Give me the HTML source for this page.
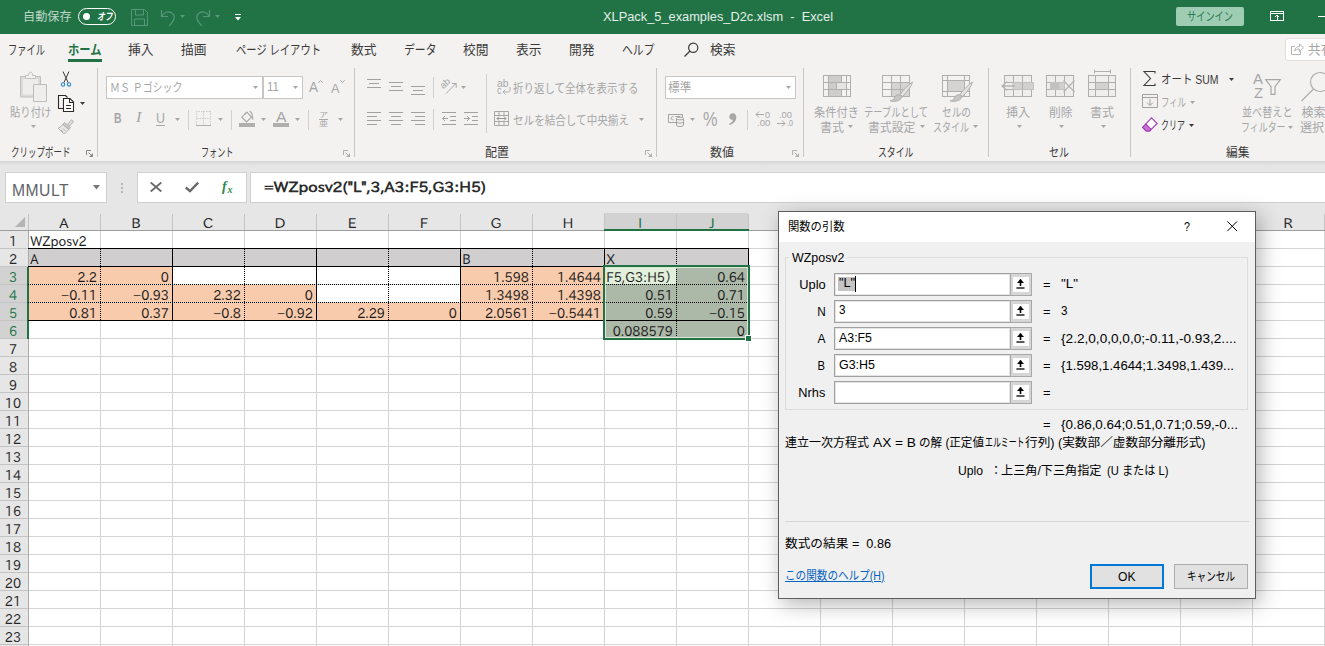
<!DOCTYPE html>
<html lang="ja">
<head>
<meta charset="utf-8">
<title>XLPack_5_examples_D2c.xlsm - Excel</title>
<style>
*{box-sizing:border-box;margin:0;padding:0}
html,body{width:1325px;height:646px;overflow:hidden;background:#fff}
body{position:relative;font-family:"Liberation Sans","Noto Sans CJK JP",sans-serif;font-size:12px;color:#262626}
.abs{position:absolute}
.t{position:absolute;white-space:nowrap;line-height:1}
svg{overflow:visible}
.cell{position:absolute;font-family:"IPAPGothic","IPAGothic","Noto Sans CJK JP",sans-serif;font-size:13.5px;line-height:18px;height:18px;white-space:nowrap;color:#1a1a1a;transform:scaleX(.955);transform-origin:0 50%}
.num{text-align:right;transform-origin:100% 50%}
.hc{transform-origin:50% 50%}
</style>
</head>
<body>
<div class="abs" style="left:0px;top:0px;width:1325px;height:34px;background:#217346;"></div><span class="t" id="t1" style="top:11.20px;font-size:12.2px;color:#bcd7c8;left:23.00px;transform-origin:0 50%;transform:scaleX(0.9949);">自動保存</span><div class="abs" style="left:78px;top:8px;width:38px;height:17px;border:1px solid #fff;border-radius:9px"></div><div class="abs" style="left:83px;top:13px;width:7px;height:7px;background:#fff;border-radius:50%"></div><span class="t" id="t2" style="top:12.00px;font-size:10px;color:#fff;font-weight:bold;font-style:italic;left:96.50px;transform-origin:0 50%;transform:scaleX(0.7750);">オフ</span><svg class="abs" style="left:131px;top:9px" width="17" height="17" viewBox="0 0 17 17" fill="none" stroke="#57967a" stroke-width="1"><path d="M.5.500h13l3 3v13h-16z"/><path d="M4.500.500v5.500h8v-5.500M3.500 16.500v-6.500h10v6.500"/></svg><svg class="abs" style="left:160px;top:9px" width="17" height="18" viewBox="0 0 17 18" fill="none" stroke="#57967a" stroke-width="1.2"><path d="M1.500 1v6.500h6.500"/><path d="M1.800 7.200c2.500-4 6.500-5.200 9.700-3.400 4.200 2.400 3.500 7.200-2.500 13.200"/></svg><svg class="abs" style="left:180px;top:15px" width="5" height="3" viewBox="0 0 5 3" ><path d="M0 0h5 l-2.5 3 z" fill="#57967a"/></svg><svg class="abs" style="left:194px;top:9px" width="17" height="18" viewBox="0 0 17 18" fill="none" stroke="#57967a" stroke-width="1.2"><path d="M15.500 1v6.500h-6.500"/><path d="M15.200 7.200c-2.500-4-6.500-5.200-9.700-3.400-4.200 2.400-3.500 7.200 2.500 13.200"/></svg><svg class="abs" style="left:215px;top:15px" width="5" height="3" viewBox="0 0 5 3" ><path d="M0 0h5 l-2.5 3 z" fill="#57967a"/></svg><div class="abs" style="left:235px;top:13.5px;width:6px;height:1px;background:#fff;"></div><svg class="abs" style="left:235px;top:16.5px" width="6" height="3.5" viewBox="0 0 6 3.5" ><path d="M0 0h6 l-3 3.5 z" fill="#fff"/></svg><span class="t" id="t3" style="top:10.00px;font-size:13px;color:#e4efe8;left:603.00px;transform-origin:0 50%;transform:scaleX(0.9855);">XLPack_5_examples_D2c.xlsm&nbsp; -&nbsp; Excel</span><div class="abs" style="left:1176px;top:7px;width:68px;height:19px;background:#9fcdb3;border-radius:2px"></div><span class="t" id="t4" style="top:10.50px;font-size:12px;color:#2c7a51;left:1187.00px;transform-origin:0 50%;transform:scaleX(0.7665);">サインイン</span><svg class="abs" style="left:1270px;top:11px" width="14" height="10" viewBox="0 0 14 10" fill="none" stroke="#fff" stroke-width="1" shape-rendering="crispEdges"><path d="M.5.500h13v9h-13zM.5 2.500h13M7 8.500v-4M5 6.300l2-2 2 2"/></svg><div class="abs" style="left:1318px;top:16px;width:7px;height:1px;background:#fff;"></div><div class="abs" style="left:0px;top:34px;width:1325px;height:127px;background:#f3f2f1;"></div><span class="t" id="t5" style="top:43.00px;font-size:13px;color:#3b3a39;left:8.00px;transform-origin:0 50%;transform:scaleX(0.7113);">ファイル</span><span class="t" id="t6" style="top:43.00px;font-size:13px;color:#3b3a39;left:128.00px;transform-origin:0 50%;transform:scaleX(0.9802);">挿入</span><span class="t" id="t7" style="top:43.00px;font-size:13px;color:#3b3a39;left:181.00px;transform-origin:0 50%;transform:scaleX(0.9802);">描画</span><span class="t" id="t8" style="top:43.00px;font-size:13px;color:#3b3a39;left:236.00px;transform-origin:0 50%;transform:scaleX(0.7917);">ページ レイアウト</span><span class="t" id="t9" style="top:43.00px;font-size:13px;color:#3b3a39;left:351.00px;transform-origin:0 50%;transform:scaleX(0.9802);">数式</span><span class="t" id="t10" style="top:43.00px;font-size:13px;color:#3b3a39;left:404.00px;transform-origin:0 50%;transform:scaleX(0.8330);">データ</span><span class="t" id="t11" style="top:43.00px;font-size:13px;color:#3b3a39;left:463.00px;transform-origin:0 50%;transform:scaleX(0.9802);">校閲</span><span class="t" id="t12" style="top:43.00px;font-size:13px;color:#3b3a39;left:516.00px;transform-origin:0 50%;transform:scaleX(0.9802);">表示</span><span class="t" id="t13" style="top:43.00px;font-size:13px;color:#3b3a39;left:569.00px;transform-origin:0 50%;transform:scaleX(0.9802);">開発</span><span class="t" id="t14" style="top:43.00px;font-size:13px;color:#3b3a39;left:622.00px;transform-origin:0 50%;transform:scaleX(0.8330);">ヘルプ</span><span class="t" id="t15" style="top:43.00px;font-size:13px;color:#3b3a39;left:710.00px;transform-origin:0 50%;transform:scaleX(0.9802);">検索</span><span class="t" id="t16" style="top:43.00px;font-size:13px;color:#217346;font-weight:bold;left:68.00px;transform-origin:0 50%;transform:scaleX(0.8673);">ホーム</span><div class="abs" style="left:68px;top:59px;width:34px;height:3px;background:#217346;"></div><svg class="abs" style="left:684px;top:42px" width="15" height="15" viewBox="0 0 15 15" fill="none" stroke="#3b3a39" stroke-width="1.2"><circle cx="9.200" cy="5.800" r="4.600"/><path d="M6 9l-5.500 5.500"/></svg><div class="abs" style="left:1285px;top:37.5px;width:50px;height:23.5px;background:#fff;border:1px solid #e1dfdd;border-radius:3px"></div><svg class="abs" style="left:1291px;top:43px" width="13" height="12" viewBox="0 0 13 12" fill="none" stroke="#b5b3b1" stroke-width="1"><path d="M4 3.500h-3.500v8h9v-3"/><path d="M3.500 8c.5-3 2.500-4.500 5-4.500v-2.500l4 3.800-4 3.700v-2.500c-2.500 0-4 .5-5 2z"/></svg><span class="t" id="t17" style="top:43.00px;font-size:13px;color:#a6a6a6;left:1308.00px;transform-origin:0 50%;transform:scaleX(0.9802);">共有</span><div class="abs" style="left:97px;top:68px;width:1px;height:89px;background:#c8c6c4;"></div><div class="abs" style="left:354px;top:68px;width:1px;height:89px;background:#c8c6c4;"></div><div class="abs" style="left:656px;top:68px;width:1px;height:89px;background:#c8c6c4;"></div><div class="abs" style="left:803px;top:68px;width:1px;height:89px;background:#c8c6c4;"></div><div class="abs" style="left:988px;top:68px;width:1px;height:89px;background:#c8c6c4;"></div><div class="abs" style="left:1130px;top:68px;width:1px;height:89px;background:#c8c6c4;"></div><svg class="abs" style="left:20px;top:72px" width="28" height="30" viewBox="0 0 28 30" fill="none" stroke-width="1"><path d="M.5 4.500h20v20.500h-20z" fill="#dddbd9" stroke="#c2c0be"/><path d="M3 7h15v15.500h-15z" fill="#eeedec" stroke="none"/><path d="M5.500 6.500v-3h3c0-4.500 4-4.500 4 0h3v3z" fill="#f3f2f1" stroke="#c2c0be"/><path d="M13.500 12.500h13v17h-13z" fill="#efeeed" stroke="#bebcba"/></svg><span class="t" id="t18" style="top:106.80px;font-size:12px;color:#a6a6a6;left:10.00px;transform-origin:0 50%;transform:scaleX(0.8643);">貼り付け</span><svg class="abs" style="left:31px;top:125px" width="5" height="3" viewBox="0 0 5 3" ><path d="M0 0h5 l-2.5 3 z" fill="#a6a6a6"/></svg><svg class="abs" style="left:60px;top:71px" width="12" height="17" viewBox="0 0 12 17" ><path d="M3 0.500l5.200 11.300M9 0.500l-5.200 11.300" stroke="#3b3a39" stroke-width="1" fill="none"/><circle cx="3" cy="13.500" r="1.700" fill="none" stroke="#2b88d8" stroke-width="1.1"/><circle cx="9" cy="13.500" r="1.700" fill="none" stroke="#2b88d8" stroke-width="1.1"/></svg><svg class="abs" style="left:58px;top:95px" width="16" height="17" viewBox="0 0 16 17" fill="none" stroke="#2b2a29" stroke-width="1.100" stroke-linejoin="miter"><path d="M5 13.500h-4.500v-13h7l2 2"/><path d="M5.500 3.500h6.500l3.500 3.500v9.500h-10z" fill="#fff"/><path d="M11.500 3.500v4h4"/><path d="M8 10.500h5M8 13.500h5"/></svg><svg class="abs" style="left:80px;top:102px" width="5" height="3" viewBox="0 0 5 3" ><path d="M0 0h5 l-2.5 3 z" fill="#3b3a39"/></svg><svg class="abs" style="left:58px;top:119px" width="16" height="15" viewBox="0 0 16 15" fill="none" stroke="#b1afad" stroke-width="1"><path d="M13.500 .8l2 1.700-3.800 4.500-2-1.700z" fill="#e4e2e0"/><path d="M6.500 3.500l6 5-1.500 1.800-6-5z" fill="#cfcdcb"/><path d="M4.800 5.500l6 5c-1.500 2-3 3.300-5 4.300l-5.500-5.500c2-1.200 3.500-2.500 4.500-3.800z" fill="#e9e7e5"/><path d="M3 11l2 2M5 9.500l2.500 2.500"/></svg><span class="t" id="t19" style="top:147.00px;font-size:12px;color:#3b3a39;left:10.80px;transform-origin:0 50%;transform:scaleX(0.7082);">クリップボード</span><svg class="abs" style="left:86px;top:150px" width="7" height="7" viewBox="0 0 7 7" ><path d="M.5 5v-4.500h4.500" fill="none" stroke="#8a8886" stroke-width="1"/><path d="M2.500 2.500l3 3" fill="none" stroke="#8a8886" stroke-width="1"/><path d="M7 3v4h-4z" fill="#8a8886"/></svg><div class="abs" style="left:106px;top:76px;width:157px;height:23px;background:#fff;border:1px solid #c8c6c4"></div><div class="abs" style="left:263px;top:76px;width:40px;height:23px;background:#fff;border:1px solid #c8c6c4"></div><span class="t" id="t20" style="top:81.50px;font-size:12px;color:#a6a6a6;left:110.00px;transform-origin:0 50%;transform:scaleX(0.8301);">ＭＳ Ｐゴシック</span><svg class="abs" style="left:253px;top:86px" width="5" height="3" viewBox="0 0 5 3" ><path d="M0 0h5 l-2.5 3 z" fill="#a6a6a6"/></svg><span class="t" id="t21" style="top:81.25px;font-size:12.5px;color:#a6a6a6;left:267.00px;transform-origin:0 50%;transform:scaleX(0.9242);">11</span><svg class="abs" style="left:293px;top:86px" width="5" height="3" viewBox="0 0 5 3" ><path d="M0 0h5 l-2.5 3 z" fill="#a6a6a6"/></svg><span class="t" id="t22" style="top:80.00px;font-size:14px;color:#a6a6a6;left:309.00px;transform-origin:0 50%;transform:scaleX(0.9632);">A</span><svg class="abs" style="left:317.5px;top:80px" width="4.4" height="3" viewBox="0 0 4.4 3" ><path d="M.3 2.800l2.200-2.300 2.200 2.300" fill="none" stroke="#a6a6a6" stroke-width="1"/></svg><span class="t" id="t23" style="top:81.50px;font-size:13px;color:#a6a6a6;left:331.00px;transform-origin:0 50%;transform:scaleX(0.9802);">A</span><svg class="abs" style="left:340px;top:80px" width="5" height="3" viewBox="0 0 5 3" ><path d="M.3.200l2.200 2.300 2.200-2.300" fill="none" stroke="#a6a6a6" stroke-width="1"/></svg><span class="t" id="t24" style="top:111.00px;font-size:14px;color:#a6a6a6;font-weight:bold;left:113.50px;transform-origin:0 50%;transform:scaleX(0.7407);">B</span><span class="t" id="t25" style="top:111.00px;font-size:14px;color:#a6a6a6;font-style:italic;font-family:'Liberation Serif',serif;left:136.00px;transform-origin:0 50%;transform:scaleX(1.1773);">I</span><span class="t" id="t26" style="top:110.50px;font-size:14px;color:#a6a6a6;left:156.00px;transform-origin:0 50%;transform:scaleX(0.8889);">U</span><div class="abs" style="left:156px;top:125px;width:9px;height:1px;background:#a6a6a6;"></div><svg class="abs" style="left:175px;top:118px" width="5" height="3" viewBox="0 0 5 3" ><path d="M0 0h5 l-2.5 3 z" fill="#a6a6a6"/></svg><div class="abs" style="left:188px;top:110px;width:1px;height:20px;background:#d2d0ce;"></div><svg class="abs" style="left:196px;top:111px" width="15" height="15" viewBox="0 0 15 15" fill="none" stroke-width="1"><path d="M.5 0v14M14.500 0v14M0 .5h15M7.500 1v13M1 7.500h13" stroke="#cfcdcb" stroke-dasharray="1.500 1"/><path d="M0 14.500h15" stroke="#b1afad"/></svg><svg class="abs" style="left:218px;top:118px" width="5" height="3" viewBox="0 0 5 3" ><path d="M0 0h5 l-2.5 3 z" fill="#a6a6a6"/></svg><div class="abs" style="left:231px;top:110px;width:1px;height:20px;background:#d2d0ce;"></div><svg class="abs" style="left:239px;top:110px" width="16" height="18" viewBox="0 0 16 18" fill="none" stroke="#a9a7a5" stroke-width="1.100"><path d="M7.800 2.200l4.800 4.800-5 5-4.800-4.800z" fill="#f3f2f1"/><path d="M5.500 4.500l2.300-2.300M10.500 1.200c1.800 .8 3.300 3.300 2.800 6.500" /><path d="M13.300 7c.8 1.200 1 2 0 2.500" /><rect x="0" y="13" width="16" height="4" fill="#b1afad" stroke="none"/></svg><svg class="abs" style="left:261px;top:118px" width="5" height="3" viewBox="0 0 5 3" ><path d="M0 0h5 l-2.5 3 z" fill="#a6a6a6"/></svg><span class="t" id="t27" style="top:109.55px;font-size:14.5px;color:#a6a6a6;left:276.00px;transform-origin:0 50%;transform:scaleX(1.0856);">A</span><div class="abs" style="left:273px;top:123px;width:16px;height:4px;background:#b1afad;"></div><svg class="abs" style="left:295px;top:118px" width="5" height="3" viewBox="0 0 5 3" ><path d="M0 0h5 l-2.5 3 z" fill="#a6a6a6"/></svg><div class="abs" style="left:308px;top:110px;width:1px;height:20px;background:#d2d0ce;"></div><span class="t" id="t28" style="top:111.00px;font-size:7px;color:#a6a6a6;font-family:'Noto Sans CJK JP',sans-serif;left:319.00px;transform-origin:0 50%;transform:scaleX(1.2857);">ア</span><span class="t" id="t29" style="top:119.00px;font-size:8px;color:#a6a6a6;font-family:'Noto Sans CJK JP',sans-serif;left:319.00px;transform-origin:0 50%;transform:scaleX(1.1250);">亜</span><div class="abs" style="left:319px;top:118.5px;width:9px;height:1px;background:#a6a6a6;"></div><svg class="abs" style="left:338px;top:118px" width="5" height="3" viewBox="0 0 5 3" ><path d="M0 0h5 l-2.5 3 z" fill="#a6a6a6"/></svg><span class="t" id="t30" style="top:147.00px;font-size:12px;color:#3b3a39;left:201.00px;transform-origin:0 50%;transform:scaleX(0.6769);">フォント</span><svg class="abs" style="left:343px;top:150px" width="7" height="7" viewBox="0 0 7 7" ><path d="M.5 5v-4.500h4.500" fill="none" stroke="#b1afad" stroke-width="1"/><path d="M2.500 2.500l3 3" fill="none" stroke="#b1afad" stroke-width="1"/><path d="M7 3v4h-4z" fill="#b1afad"/></svg><svg class="abs" style="left:367px;top:79px" width="14" height="12" viewBox="0 0 14 12" ><rect x="0" y="0" width="14" height="1" fill="#a3a19f"/><rect x="2" y="4" width="10" height="1" fill="#a3a19f"/><rect x="0" y="8" width="14" height="1" fill="#a3a19f"/></svg><svg class="abs" style="left:389px;top:82px" width="14" height="12" viewBox="0 0 14 12" ><rect x="0" y="0" width="14" height="1" fill="#a3a19f"/><rect x="2" y="4" width="10" height="1" fill="#a3a19f"/><rect x="0" y="8" width="14" height="1" fill="#a3a19f"/></svg><svg class="abs" style="left:411px;top:86px" width="14" height="12" viewBox="0 0 14 12" ><rect x="0" y="0" width="14" height="1" fill="#a3a19f"/><rect x="2" y="4" width="10" height="1" fill="#a3a19f"/><rect x="0" y="8" width="14" height="1" fill="#a3a19f"/></svg><div class="abs" style="left:433px;top:77px;width:1px;height:21px;background:#d2d0ce;"></div><span class="t" id="t31" style="top:81.75px;font-size:9.5px;color:#a6a6a6;left:440.50px;transform-origin:0 50%;transform-origin:0 50%;rotate:-42deg;">ab</span><svg class="abs" style="left:445px;top:82px" width="12" height="12" viewBox="0 0 12 12" fill="none" stroke="#a9a7a5" stroke-width="1"><path d="M1 11.500l10-10M7 1.500h4.200v4.200"/></svg><svg class="abs" style="left:461px;top:86px" width="5" height="3" viewBox="0 0 5 3" ><path d="M0 0h5 l-2.5 3 z" fill="#a6a6a6"/></svg><div class="abs" style="left:486px;top:74px;width:1px;height:59px;background:#d2d0ce;"></div><span class="t" id="t32" style="top:78.50px;font-size:10px;color:#a6a6a6;left:496.50px;transform-origin:0 50%;transform:scaleX(1.0337);">ab</span><span class="t" id="t33" style="top:86.00px;font-size:10px;color:#a6a6a6;left:496.50px;transform-origin:0 50%;transform:scaleX(0.9000);">c</span><svg class="abs" style="left:502px;top:87px" width="9" height="8" viewBox="0 0 9 8" fill="none" stroke="#b1afad" stroke-width="1"><path d="M8 0v3.500c0 1-1 1.500-2 1.500h-5M3.500 2.500l-2.500 2.500 2.500 2.500"/></svg><span class="t" id="t34" style="top:83.00px;font-size:12px;color:#a6a6a6;left:513.00px;transform-origin:0 50%;transform:scaleX(0.8736);">折り返して全体を表示する</span><svg class="abs" style="left:367px;top:112px" width="14" height="16" viewBox="0 0 14 16" ><rect x="0" y="0" width="14" height="1" fill="#a3a19f"/><rect x="0" y="4" width="10" height="1" fill="#a3a19f"/><rect x="0" y="8" width="14" height="1" fill="#a3a19f"/><rect x="0" y="12" width="10" height="1" fill="#a3a19f"/></svg><svg class="abs" style="left:389px;top:112px" width="14" height="16" viewBox="0 0 14 16" ><rect x="0" y="0" width="14" height="1" fill="#a3a19f"/><rect x="2" y="4" width="10" height="1" fill="#a3a19f"/><rect x="0" y="8" width="14" height="1" fill="#a3a19f"/><rect x="2" y="12" width="10" height="1" fill="#a3a19f"/></svg><svg class="abs" style="left:411px;top:112px" width="14" height="16" viewBox="0 0 14 16" ><rect x="0" y="0" width="14" height="1" fill="#a3a19f"/><rect x="4" y="4" width="10" height="1" fill="#a3a19f"/><rect x="0" y="8" width="14" height="1" fill="#a3a19f"/><rect x="4" y="12" width="10" height="1" fill="#a3a19f"/></svg><div class="abs" style="left:433px;top:109px;width:1px;height:21px;background:#d2d0ce;"></div><svg class="abs" style="left:442px;top:112px" width="14" height="13" viewBox="0 0 14 13" fill="none" stroke="#a3a19f" stroke-width="1"><path d="M0 .5h14M8 4.500h6M8 8.500h6M0 12.500h14M6 6.500h-5.500M3 4l-2.500 2.500 2.500 2.500"/></svg><svg class="abs" style="left:464px;top:112px" width="14" height="13" viewBox="0 0 14 13" fill="none" stroke="#a3a19f" stroke-width="1"><path d="M0 .5h14M8 4.500h6M8 8.500h6M0 12.500h14M0 6.500h5.500M3 4l2.500 2.500-2.500 2.500"/></svg><svg class="abs" style="left:494px;top:111px" width="15" height="15" viewBox="0 0 15 15" fill="none" stroke="#a9a7a5" stroke-width="1"><path d="M.5.500h14v14h-14zM.5 4.500h14M.5 10.500h14M5 .5v4M10 .5v4M5 10.500v4M10 10.500v4"/><path d="M3 7.500h9M5 5.500l-2 2 2 2M10 5.500l2 2-2 2" stroke="#979593"/></svg><span class="t" id="t35" style="top:114.50px;font-size:12px;color:#a6a6a6;left:513.00px;transform-origin:0 50%;transform:scaleX(0.8811);">セルを結合して中央揃え</span><svg class="abs" style="left:639px;top:118px" width="5" height="3" viewBox="0 0 5 3" ><path d="M0 0h5 l-2.5 3 z" fill="#a6a6a6"/></svg><span class="t" id="t36" style="top:147.00px;font-size:12px;color:#3b3a39;left:485.00px;transform-origin:0 50%;">配置</span><svg class="abs" style="left:645px;top:150px" width="7" height="7" viewBox="0 0 7 7" ><path d="M.5 5v-4.500h4.500" fill="none" stroke="#b1afad" stroke-width="1"/><path d="M2.500 2.500l3 3" fill="none" stroke="#b1afad" stroke-width="1"/><path d="M7 3v4h-4z" fill="#b1afad"/></svg><div class="abs" style="left:665px;top:76px;width:131px;height:23px;background:#fff;border:1px solid #c8c6c4"></div><span class="t" id="t37" style="top:81.50px;font-size:12px;color:#a6a6a6;left:667.50px;transform-origin:0 50%;transform:scaleX(0.9785);">標準</span><svg class="abs" style="left:786px;top:86px" width="5" height="3" viewBox="0 0 5 3" ><path d="M0 0h5 l-2.5 3 z" fill="#a6a6a6"/></svg><svg class="abs" style="left:668px;top:114px" width="16" height="13" viewBox="0 0 16 13" fill="none" stroke="#a3a19f" stroke-width="1"><path d="M.5.500h14v8h-14z"/><path d="M5.500 2.800c-2.500-.8-3.500 3.500 0 3M7.500 2.500h4.500"/><path d="M8.500 4.500v6.500c0 2 7 2 7 0v-6.500" fill="#f3f2f1"/><ellipse cx="12" cy="4.500" rx="3.500" ry="1.400" fill="#f3f2f1"/><path d="M8.500 7.700c0 1.800 7 1.800 7 0"/></svg><svg class="abs" style="left:690px;top:118px" width="5" height="3" viewBox="0 0 5 3" ><path d="M0 0h5 l-2.5 3 z" fill="#a6a6a6"/></svg><span class="t" id="t38" style="top:108.50px;font-size:20px;color:#a6a6a6;left:702.50px;transform-origin:0 50%;transform:scaleX(0.8147);">%</span><svg class="abs" style="left:728px;top:113px" width="9" height="13" viewBox="0 0 9 13" ><path d="M4.800 .3c2.200 0 3.500 1.700 3.500 4 0 3.500-2.500 6.500-6.800 7.700l-.5-1c2.500-1 3.800-2.500 3.800-4.200-2 .3-3.500-1-3.500-3s1.500-3.500 3.500-3.500z" fill="#a9a7a5"/></svg><div class="abs" style="left:747px;top:110px;width:1px;height:20px;background:#d2d0ce;"></div><span class="t" id="t39" style="top:109.75px;font-size:9.5px;color:#a6a6a6;left:765.00px;transform-origin:0 50%;transform:scaleX(0.9440);">0</span><span class="t" id="t40" style="top:118.25px;font-size:9.5px;color:#a6a6a6;left:756.50px;transform-origin:0 50%;transform:scaleX(1.0213);">.00</span><svg class="abs" style="left:755px;top:111px" width="9" height="7" viewBox="0 0 9 7" fill="none" stroke="#a9a7a5" stroke-width="1"><path d="M9 3.500h-8M4 .5l-3 3 3 3"/></svg><span class="t" id="t41" style="top:109.75px;font-size:9.5px;color:#a6a6a6;left:779.00px;transform-origin:0 50%;transform:scaleX(0.9835);">.00</span><span class="t" id="t42" style="top:118.25px;font-size:9.5px;color:#a6a6a6;left:786.50px;transform-origin:0 50%;transform:scaleX(0.7559);">.0</span><svg class="abs" style="left:777px;top:119.5px" width="9" height="7" viewBox="0 0 9 7" fill="none" stroke="#a9a7a5" stroke-width="1"><path d="M0 3.500h8M5 .5l3 3-3 3"/></svg><span class="t" id="t43" style="top:147.00px;font-size:12px;color:#3b3a39;left:710.00px;transform-origin:0 50%;">数値</span><svg class="abs" style="left:792px;top:150px" width="7" height="7" viewBox="0 0 7 7" ><path d="M.5 5v-4.500h4.500" fill="none" stroke="#b1afad" stroke-width="1"/><path d="M2.500 2.500l3 3" fill="none" stroke="#b1afad" stroke-width="1"/><path d="M7 3v4h-4z" fill="#b1afad"/></svg><svg class="abs" style="left:823px;top:75px" width="28" height="22" viewBox="0 0 28 22" fill="none" stroke="#b1afad" stroke-width="1"><rect x=".5" y=".5" width="27" height="21" fill="#f3f2f1"/><path d="M5.500 1h13v6.500h-13zM5.500 7.500h8v7h-8zM5.500 14.500h13v7h-13z" fill="#cfcdcb" stroke="none"/><path d="M13.500 7.500h9.500v7h-9.500z" fill="#e6e4e2" stroke="none"/><path d="M.5.500h27v21h-27zM.5 7.500h27M.5 14.500h27M5.500.500v21M18.500.500v7M18.500 14.500v7M23.500.500v21M13.500 7.500v7"/></svg><span class="t" id="t44" style="top:106.80px;font-size:12px;color:#a6a6a6;left:814.00px;transform-origin:0 50%;transform:scaleX(0.9372);">条件付き</span><span class="t" id="t45" style="top:122.00px;font-size:12px;color:#a6a6a6;left:820.00px;transform-origin:0 50%;">書式</span><svg class="abs" style="left:848px;top:125px" width="5" height="3" viewBox="0 0 5 3" ><path d="M0 0h5 l-2.5 3 z" fill="#a6a6a6"/></svg><svg class="abs" style="left:882px;top:75px" width="30" height="24" viewBox="0 0 30 24" fill="none" stroke="#b1afad" stroke-width="1"><path d="M.5.500h27v21h-27z" fill="#f3f2f1"/><path d="M9.500 7.500h18v14h-18z" fill="#d6d4d2" stroke="none"/><path d="M.5.500h27v21h-27zM.5 7.500h27M.5 14.500h27M9.500.500v21M18.500.500v21"/><path d="M30.500 7c-4 2.500-9 7.500-12.500 12.500l2.500 2c4-4 9-10 10-14.500z" fill="#e4e2e0"/><path d="M17.500 19.800c-2.500-.5-4.500 1-5 3.200-.5 1.500-2 2.500-4.500 2.800 4 1.200 10 .7 12-3.800z" fill="#c8c6c4"/></svg><span class="t" id="t46" style="top:106.80px;font-size:12px;color:#a6a6a6;left:864.00px;transform-origin:0 50%;transform:scaleX(0.7718);">テーブルとして</span><span class="t" id="t47" style="top:122.00px;font-size:12px;color:#a6a6a6;left:868.00px;transform-origin:0 50%;transform:scaleX(0.9893);">書式設定</span><svg class="abs" style="left:920px;top:125px" width="5" height="3" viewBox="0 0 5 3" ><path d="M0 0h5 l-2.5 3 z" fill="#a6a6a6"/></svg><svg class="abs" style="left:942px;top:75px" width="30" height="24" viewBox="0 0 30 24" fill="none" stroke="#b1afad" stroke-width="1"><path d="M.5.500h27v21h-27z" fill="#f3f2f1"/><path d="M5.500 5.500h17v11h-17z" fill="#d6d4d2" stroke="none"/><path d="M.5.500h27v21h-27zM.5 5.500h27M.5 16.500h27M5.500.500v21M22.500.500v21"/><path d="M30.500 7c-4 2.500-9 7.500-12.500 12.500l2.500 2c4-4 9-10 10-14.500z" fill="#e4e2e0"/><path d="M17.500 19.800c-2.500-.5-4.500 1-5 3.200-.5 1.500-2 2.500-4.500 2.800 4 1.200 10 .7 12-3.800z" fill="#c8c6c4"/></svg><span class="t" id="t48" style="top:106.80px;font-size:12px;color:#a6a6a6;left:941.50px;transform-origin:0 50%;transform:scaleX(0.8052);">セルの</span><span class="t" id="t49" style="top:122.00px;font-size:12px;color:#a6a6a6;left:932.50px;transform-origin:0 50%;transform:scaleX(0.7498);">スタイル</span><svg class="abs" style="left:973px;top:125px" width="5" height="3" viewBox="0 0 5 3" ><path d="M0 0h5 l-2.5 3 z" fill="#a6a6a6"/></svg><span class="t" id="t50" style="top:147.00px;font-size:12px;color:#3b3a39;left:878.00px;transform-origin:0 50%;transform:scaleX(0.7393);">スタイル</span><svg class="abs" style="left:1001px;top:75px" width="33" height="22" viewBox="0 0 33 22" fill="none" stroke="#b1afad" stroke-width="1"><rect x="3.500" y=".5" width="27" height="21" fill="#efeeed"/><path d="M3.500.500h27v21h-27zM3.500 7.500h27M3.500 14.500h27M12.500.500v21M21.500.500v21"/><path d="M12 7.500h20.500v7h-20.500z" fill="#d3d1cf" stroke="#c3c1bf"/><path d="M21.500 7.500v7"/><path d="M14 11h-12.500M6 6.500l-5 4.500 5 4.500" stroke="#b7b5b3" stroke-width="1.300"/></svg><span class="t" id="t51" style="top:106.80px;font-size:12px;color:#a6a6a6;left:1006.00px;transform-origin:0 50%;">挿入</span><svg class="abs" style="left:1016.5px;top:125px" width="5" height="3" viewBox="0 0 5 3" ><path d="M0 0h5 l-2.5 3 z" fill="#a6a6a6"/></svg><svg class="abs" style="left:1043px;top:75px" width="33" height="22" viewBox="0 0 33 22" fill="none" stroke="#b1afad" stroke-width="1"><rect x="3.500" y=".5" width="27" height="21" fill="#efeeed"/><path d="M3.500 7.500v-7h27v7M3.500 14.500v7h27v-7M3.500 7.500h18M3.500 14.500h18M12.500.500v21M21.500.500v7M21.500 14.500v7"/><path d="M7.500 7.500h14v7h-14z" fill="#d3d1cf" stroke="#c3c1bf"/><path d="M7.500 7.500h9v7h-9z" fill="#c4c2c0" stroke="none"/><path d="M20.500 5.500l11 11.500M31.500 5.500l-11 11.500" stroke="#b7b5b3" stroke-width="1.300"/></svg><span class="t" id="t52" style="top:106.80px;font-size:12px;color:#a6a6a6;left:1048.50px;transform-origin:0 50%;transform:scaleX(0.9785);">削除</span><svg class="abs" style="left:1059px;top:125px" width="5" height="3" viewBox="0 0 5 3" ><path d="M0 0h5 l-2.5 3 z" fill="#a6a6a6"/></svg><svg class="abs" style="left:1085px;top:75px" width="31" height="22" viewBox="0 0 31 22" fill="none" stroke="#b1afad" stroke-width="1"><rect x="3.500" y=".5" width="27" height="21" fill="#efeeed"/><path d="M3.500.500h27v21h-27zM3.500 7.500h27M3.500 14.500h27M10.500.500v21M23.500.500v21"/><path d="M10.500 7.500h13v7h-13z" fill="#d3d1cf"/><path d="M9.500 -3.500h16M9.500 -5.500v4M25.500 -5.500v4"/></svg><span class="t" id="t53" style="top:106.80px;font-size:12px;color:#a6a6a6;left:1090.00px;transform-origin:0 50%;">書式</span><svg class="abs" style="left:1101px;top:125px" width="5" height="3" viewBox="0 0 5 3" ><path d="M0 0h5 l-2.5 3 z" fill="#a6a6a6"/></svg><span class="t" id="t54" style="top:147.00px;font-size:12px;color:#3b3a39;left:1049.00px;transform-origin:0 50%;transform:scaleX(0.8328);">セル</span><svg class="abs" style="left:1143px;top:71px" width="13" height="15" viewBox="0 0 13 15" fill="none" stroke="#3b3a39" stroke-width="1.100"><path d="M12 2.500v-2h-11l6.500 7-6.500 7h11v-2"/></svg><span class="t" id="t55" style="top:74.00px;font-size:12px;color:#3b3a39;left:1160.80px;transform-origin:0 50%;transform:scaleX(0.8710);">オート SUM</span><svg class="abs" style="left:1229px;top:78px" width="5" height="3" viewBox="0 0 5 3" ><path d="M0 0h5 l-2.5 3 z" fill="#3b3a39"/></svg><svg class="abs" style="left:1142px;top:94px" width="16" height="14" viewBox="0 0 16 14" fill="none" stroke="#a3a19f" stroke-width="1"><path d="M.5.500h15v13h-15zM.5 3.500h15"/><path d="M8 5v6.500M5 8.500l3 3 3-3"/></svg><span class="t" id="t56" style="top:97.00px;font-size:12px;color:#a6a6a6;left:1160.50px;transform-origin:0 50%;transform:scaleX(0.6990);">フィル</span><svg class="abs" style="left:1190px;top:101px" width="5" height="3" viewBox="0 0 5 3" ><path d="M0 0h5 l-2.5 3 z" fill="#a6a6a6"/></svg><svg class="abs" style="left:1142px;top:117px" width="16" height="15" viewBox="0 0 16 15" fill="none" stroke="#a33bb5" stroke-width="1.100"><path d="M9.500 .8l5.700 5.700-7.500 7.500h-3.500l-3.500-3.500z" fill="#fff"/><path d="M3.800 7l5.200 5.200-1.500 1.800h-3.300l-3.500-3.500z" fill="#c770d4"/></svg><span class="t" id="t57" style="top:119.50px;font-size:12px;color:#3b3a39;left:1161.00px;transform-origin:0 50%;transform:scaleX(0.6664);">クリア</span><svg class="abs" style="left:1189px;top:124px" width="5" height="3" viewBox="0 0 5 3" ><path d="M0 0h5 l-2.5 3 z" fill="#3b3a39"/></svg><span class="t" id="t58" style="top:72.25px;font-size:14.5px;color:#a6a6a6;left:1253.00px;transform-origin:0 50%;transform:scaleX(1.0339);">A</span><span class="t" id="t59" style="top:86.25px;font-size:14.5px;color:#a6a6a6;left:1253.50px;transform-origin:0 50%;transform:scaleX(1.0159);">Z</span><svg class="abs" style="left:1265px;top:79px" width="16" height="16" viewBox="0 0 16 16" fill="none" stroke="#a9a7a5" stroke-width="1.200"><path d="M.7.600h14.600l-5.300 7v7.700h-4v-7.700z"/></svg><span class="t" id="t60" style="top:106.80px;font-size:12px;color:#a6a6a6;left:1242.00px;transform-origin:0 50%;transform:scaleX(0.8414);">並べ替えと</span><span class="t" id="t61" style="top:122.00px;font-size:12px;color:#a6a6a6;left:1241.00px;transform-origin:0 50%;transform:scaleX(0.7446);">フィルター</span><svg class="abs" style="left:1288px;top:126px" width="5" height="3" viewBox="0 0 5 3" ><path d="M0 0h5 l-2.5 3 z" fill="#a6a6a6"/></svg><svg class="abs" style="left:1301px;top:72px" width="30" height="30" viewBox="0 0 30 30" fill="none" stroke="#b1afad" stroke-width="1.200"><circle cx="19" cy="10" r="9.500"/><path d="M12.500 17l-12 12"/></svg><span class="t" id="t62" style="top:106.80px;font-size:12px;color:#a6a6a6;left:1301.50px;transform-origin:0 50%;">検索と</span><span class="t" id="t63" style="top:122.00px;font-size:12px;color:#a6a6a6;left:1300.00px;transform-origin:0 50%;">選択</span><span class="t" id="t64" style="top:147.00px;font-size:12px;color:#3b3a39;left:1226.00px;transform-origin:0 50%;transform:scaleX(0.9785);">編集</span><div class="abs" style="left:0px;top:161px;width:1325px;height:52px;background:#e6e6e6;"></div><div class="abs" style="left:0px;top:161px;width:1325px;height:5px;background:linear-gradient(#d6d6d6,#e6e6e6)"></div><div class="abs" style="left:5px;top:172px;width:102px;height:31px;background:#fff;border:1px solid #d0d0d0"></div><span class="t" id="t65" style="top:182.60px;font-size:16px;color:#5f6368;left:11.80px;transform-origin:0 50%;transform:scaleX(0.9793);letter-spacing:.5px;">MMULT</span><svg class="abs" style="left:93px;top:185px" width="7" height="4.5" viewBox="0 0 7 4.5" ><path d="M0 0h7 l-3.5 4.5 z" fill="#777"/></svg><div class="abs" style="left:121px;top:182.5px;width:2px;height:2px;background:#b4b4b4;"></div><div class="abs" style="left:121px;top:186.5px;width:2px;height:2px;background:#b4b4b4;"></div><div class="abs" style="left:121px;top:190.5px;width:2px;height:2px;background:#b4b4b4;"></div><div class="abs" style="left:137px;top:172px;width:110px;height:31px;background:#fff;border:1px solid #d0d0d0"></div><svg class="abs" style="left:150px;top:182px" width="12" height="10" viewBox="0 0 12 10" fill="none" stroke="#6a6a6a" stroke-width="1.800"><path d="M.7.500l10.600 9M11.300.500l-10.600 9"/></svg><svg class="abs" style="left:185px;top:182px" width="14" height="10" viewBox="0 0 14 10" fill="none" stroke="#6a6a6a" stroke-width="2.400"><path d="M.8 5.500l4.200 3.700 8.200-8.500"/></svg><span class="t" id="t66" style="top:180.00px;font-size:14px;color:#2e8b57;font-weight:bold;font-style:italic;font-family:'Liberation Serif',serif;left:222.00px;transform-origin:0 50%;">f</span><span class="t" id="t67" style="top:184.50px;font-size:10px;color:#2e8b57;font-weight:bold;font-style:italic;font-family:'Liberation Serif',serif;left:227.50px;transform-origin:0 50%;">x</span><div class="abs" style="left:250px;top:172px;width:1080px;height:31px;background:#fff;border:1px solid #d0d0d0"></div><span class="t" id="t68" style="top:179.80px;font-size:14px;color:#2b2b2b;font-weight:bold;font-family:'IPAPGothic','IPAGothic','Noto Sans CJK JP',sans-serif;left:264.00px;transform-origin:0 50%;transform:scaleX(1.1195);">=WZposv2("L",3,A3:F5,G3:H5)</span><div class="abs" style="left:0px;top:213px;width:1325px;height:433px;background:#fff;"></div><div class="abs" style="left:0px;top:213px;width:1325px;height:17px;background:#e6e6e6;"></div><div class="abs" style="left:0px;top:230px;width:28px;height:416px;background:#e6e6e6;"></div><div class="abs" style="left:604px;top:213px;width:144px;height:17px;background:#d2d2d2;"></div><div class="abs" style="left:0px;top:267px;width:28px;height:72px;background:#d2d2d2;"></div><div class="abs" style="left:28px;top:231px;width:1px;height:415px;background:#d4d4d4;"></div><div class="abs" style="left:28px;top:214px;width:1px;height:16px;background:#c4c4c4;"></div><div class="abs" style="left:100px;top:231px;width:1px;height:415px;background:#d4d4d4;"></div><div class="abs" style="left:100px;top:214px;width:1px;height:16px;background:#c4c4c4;"></div><div class="abs" style="left:172px;top:231px;width:1px;height:415px;background:#d4d4d4;"></div><div class="abs" style="left:172px;top:214px;width:1px;height:16px;background:#c4c4c4;"></div><div class="abs" style="left:244px;top:231px;width:1px;height:415px;background:#d4d4d4;"></div><div class="abs" style="left:244px;top:214px;width:1px;height:16px;background:#c4c4c4;"></div><div class="abs" style="left:316px;top:231px;width:1px;height:415px;background:#d4d4d4;"></div><div class="abs" style="left:316px;top:214px;width:1px;height:16px;background:#c4c4c4;"></div><div class="abs" style="left:388px;top:231px;width:1px;height:415px;background:#d4d4d4;"></div><div class="abs" style="left:388px;top:214px;width:1px;height:16px;background:#c4c4c4;"></div><div class="abs" style="left:460px;top:231px;width:1px;height:415px;background:#d4d4d4;"></div><div class="abs" style="left:460px;top:214px;width:1px;height:16px;background:#c4c4c4;"></div><div class="abs" style="left:532px;top:231px;width:1px;height:415px;background:#d4d4d4;"></div><div class="abs" style="left:532px;top:214px;width:1px;height:16px;background:#c4c4c4;"></div><div class="abs" style="left:604px;top:231px;width:1px;height:415px;background:#d4d4d4;"></div><div class="abs" style="left:604px;top:214px;width:1px;height:16px;background:#c4c4c4;"></div><div class="abs" style="left:676px;top:231px;width:1px;height:415px;background:#d4d4d4;"></div><div class="abs" style="left:676px;top:214px;width:1px;height:16px;background:#c4c4c4;"></div><div class="abs" style="left:748px;top:231px;width:1px;height:415px;background:#d4d4d4;"></div><div class="abs" style="left:748px;top:214px;width:1px;height:16px;background:#c4c4c4;"></div><div class="abs" style="left:820px;top:231px;width:1px;height:415px;background:#d4d4d4;"></div><div class="abs" style="left:820px;top:214px;width:1px;height:16px;background:#c4c4c4;"></div><div class="abs" style="left:892px;top:231px;width:1px;height:415px;background:#d4d4d4;"></div><div class="abs" style="left:892px;top:214px;width:1px;height:16px;background:#c4c4c4;"></div><div class="abs" style="left:964px;top:231px;width:1px;height:415px;background:#d4d4d4;"></div><div class="abs" style="left:964px;top:214px;width:1px;height:16px;background:#c4c4c4;"></div><div class="abs" style="left:1036px;top:231px;width:1px;height:415px;background:#d4d4d4;"></div><div class="abs" style="left:1036px;top:214px;width:1px;height:16px;background:#c4c4c4;"></div><div class="abs" style="left:1108px;top:231px;width:1px;height:415px;background:#d4d4d4;"></div><div class="abs" style="left:1108px;top:214px;width:1px;height:16px;background:#c4c4c4;"></div><div class="abs" style="left:1180px;top:231px;width:1px;height:415px;background:#d4d4d4;"></div><div class="abs" style="left:1180px;top:214px;width:1px;height:16px;background:#c4c4c4;"></div><div class="abs" style="left:1252px;top:231px;width:1px;height:415px;background:#d4d4d4;"></div><div class="abs" style="left:1252px;top:214px;width:1px;height:16px;background:#c4c4c4;"></div><div class="abs" style="left:1324px;top:231px;width:1px;height:415px;background:#d4d4d4;"></div><div class="abs" style="left:1324px;top:214px;width:1px;height:16px;background:#c4c4c4;"></div><div class="abs" style="left:28px;top:230px;width:1297px;height:1px;background:#d4d4d4;"></div><div class="abs" style="left:0px;top:230px;width:28px;height:1px;background:#c4c4c4;"></div><div class="abs" style="left:28px;top:248px;width:1297px;height:1px;background:#d4d4d4;"></div><div class="abs" style="left:0px;top:248px;width:28px;height:1px;background:#c4c4c4;"></div><div class="abs" style="left:28px;top:266px;width:1297px;height:1px;background:#d4d4d4;"></div><div class="abs" style="left:0px;top:266px;width:28px;height:1px;background:#c4c4c4;"></div><div class="abs" style="left:28px;top:284px;width:1297px;height:1px;background:#d4d4d4;"></div><div class="abs" style="left:0px;top:284px;width:28px;height:1px;background:#c4c4c4;"></div><div class="abs" style="left:28px;top:302px;width:1297px;height:1px;background:#d4d4d4;"></div><div class="abs" style="left:0px;top:302px;width:28px;height:1px;background:#c4c4c4;"></div><div class="abs" style="left:28px;top:320px;width:1297px;height:1px;background:#d4d4d4;"></div><div class="abs" style="left:0px;top:320px;width:28px;height:1px;background:#c4c4c4;"></div><div class="abs" style="left:28px;top:338px;width:1297px;height:1px;background:#d4d4d4;"></div><div class="abs" style="left:0px;top:338px;width:28px;height:1px;background:#c4c4c4;"></div><div class="abs" style="left:28px;top:356px;width:1297px;height:1px;background:#d4d4d4;"></div><div class="abs" style="left:0px;top:356px;width:28px;height:1px;background:#c4c4c4;"></div><div class="abs" style="left:28px;top:374px;width:1297px;height:1px;background:#d4d4d4;"></div><div class="abs" style="left:0px;top:374px;width:28px;height:1px;background:#c4c4c4;"></div><div class="abs" style="left:28px;top:392px;width:1297px;height:1px;background:#d4d4d4;"></div><div class="abs" style="left:0px;top:392px;width:28px;height:1px;background:#c4c4c4;"></div><div class="abs" style="left:28px;top:410px;width:1297px;height:1px;background:#d4d4d4;"></div><div class="abs" style="left:0px;top:410px;width:28px;height:1px;background:#c4c4c4;"></div><div class="abs" style="left:28px;top:428px;width:1297px;height:1px;background:#d4d4d4;"></div><div class="abs" style="left:0px;top:428px;width:28px;height:1px;background:#c4c4c4;"></div><div class="abs" style="left:28px;top:446px;width:1297px;height:1px;background:#d4d4d4;"></div><div class="abs" style="left:0px;top:446px;width:28px;height:1px;background:#c4c4c4;"></div><div class="abs" style="left:28px;top:464px;width:1297px;height:1px;background:#d4d4d4;"></div><div class="abs" style="left:0px;top:464px;width:28px;height:1px;background:#c4c4c4;"></div><div class="abs" style="left:28px;top:482px;width:1297px;height:1px;background:#d4d4d4;"></div><div class="abs" style="left:0px;top:482px;width:28px;height:1px;background:#c4c4c4;"></div><div class="abs" style="left:28px;top:500px;width:1297px;height:1px;background:#d4d4d4;"></div><div class="abs" style="left:0px;top:500px;width:28px;height:1px;background:#c4c4c4;"></div><div class="abs" style="left:28px;top:518px;width:1297px;height:1px;background:#d4d4d4;"></div><div class="abs" style="left:0px;top:518px;width:28px;height:1px;background:#c4c4c4;"></div><div class="abs" style="left:28px;top:536px;width:1297px;height:1px;background:#d4d4d4;"></div><div class="abs" style="left:0px;top:536px;width:28px;height:1px;background:#c4c4c4;"></div><div class="abs" style="left:28px;top:554px;width:1297px;height:1px;background:#d4d4d4;"></div><div class="abs" style="left:0px;top:554px;width:28px;height:1px;background:#c4c4c4;"></div><div class="abs" style="left:28px;top:572px;width:1297px;height:1px;background:#d4d4d4;"></div><div class="abs" style="left:0px;top:572px;width:28px;height:1px;background:#c4c4c4;"></div><div class="abs" style="left:28px;top:590px;width:1297px;height:1px;background:#d4d4d4;"></div><div class="abs" style="left:0px;top:590px;width:28px;height:1px;background:#c4c4c4;"></div><div class="abs" style="left:28px;top:608px;width:1297px;height:1px;background:#d4d4d4;"></div><div class="abs" style="left:0px;top:608px;width:28px;height:1px;background:#c4c4c4;"></div><div class="abs" style="left:28px;top:626px;width:1297px;height:1px;background:#d4d4d4;"></div><div class="abs" style="left:0px;top:626px;width:28px;height:1px;background:#c4c4c4;"></div><div class="abs" style="left:28px;top:644px;width:1297px;height:1px;background:#d4d4d4;"></div><div class="abs" style="left:0px;top:644px;width:28px;height:1px;background:#c4c4c4;"></div><div class="abs" style="left:0px;top:230px;width:1325px;height:1px;background:#9e9e9e;"></div><div class="abs" style="left:28px;top:231px;width:1px;height:415px;background:#ababab;"></div><svg class="abs" style="left:15px;top:217px" width="10" height="10" viewBox="0 0 10 10" ><path d="M10 0v10h-10z" fill="#b4b4b4"/></svg><div class="cell hc" style="left:28px;top:214px;width:72px;text-align:center;line-height:19px;transform:scaleX(1.08);color:#262626">A</div><div class="cell hc" style="left:100px;top:214px;width:72px;text-align:center;line-height:19px;transform:scaleX(1.08);color:#262626">B</div><div class="cell hc" style="left:172px;top:214px;width:72px;text-align:center;line-height:19px;transform:scaleX(1.08);color:#262626">C</div><div class="cell hc" style="left:244px;top:214px;width:72px;text-align:center;line-height:19px;transform:scaleX(1.08);color:#262626">D</div><div class="cell hc" style="left:316px;top:214px;width:72px;text-align:center;line-height:19px;transform:scaleX(1.08);color:#262626">E</div><div class="cell hc" style="left:388px;top:214px;width:72px;text-align:center;line-height:19px;transform:scaleX(1.08);color:#262626">F</div><div class="cell hc" style="left:460px;top:214px;width:72px;text-align:center;line-height:19px;transform:scaleX(1.08);color:#262626">G</div><div class="cell hc" style="left:532px;top:214px;width:72px;text-align:center;line-height:19px;transform:scaleX(1.08);color:#262626">H</div><div class="cell hc" style="left:604px;top:214px;width:72px;text-align:center;line-height:19px;transform:scaleX(1.08);color:#217346">I</div><div class="cell hc" style="left:676px;top:214px;width:72px;text-align:center;line-height:19px;transform:scaleX(1.08);color:#217346">J</div><div class="cell hc" style="left:748px;top:214px;width:72px;text-align:center;line-height:19px;transform:scaleX(1.08);color:#262626">K</div><div class="cell hc" style="left:820px;top:214px;width:72px;text-align:center;line-height:19px;transform:scaleX(1.08);color:#262626">L</div><div class="cell hc" style="left:892px;top:214px;width:72px;text-align:center;line-height:19px;transform:scaleX(1.08);color:#262626">M</div><div class="cell hc" style="left:964px;top:214px;width:72px;text-align:center;line-height:19px;transform:scaleX(1.08);color:#262626">N</div><div class="cell hc" style="left:1036px;top:214px;width:72px;text-align:center;line-height:19px;transform:scaleX(1.08);color:#262626">O</div><div class="cell hc" style="left:1108px;top:214px;width:72px;text-align:center;line-height:19px;transform:scaleX(1.08);color:#262626">P</div><div class="cell hc" style="left:1180px;top:214px;width:72px;text-align:center;line-height:19px;transform:scaleX(1.08);color:#262626">Q</div><div class="cell hc" style="left:1252px;top:214px;width:72px;text-align:center;line-height:19px;transform:scaleX(1.08);color:#262626">R</div><div class="cell hc" style="left:-1px;top:232px;width:28px;text-align:center;line-height:19px;color:#262626">1</div><div class="cell hc" style="left:-1px;top:250px;width:28px;text-align:center;line-height:19px;color:#262626">2</div><div class="cell hc" style="left:-1px;top:268px;width:28px;text-align:center;line-height:19px;color:#217346">3</div><div class="cell hc" style="left:-1px;top:286px;width:28px;text-align:center;line-height:19px;color:#217346">4</div><div class="cell hc" style="left:-1px;top:304px;width:28px;text-align:center;line-height:19px;color:#217346">5</div><div class="cell hc" style="left:-1px;top:322px;width:28px;text-align:center;line-height:19px;color:#217346">6</div><div class="cell hc" style="left:-1px;top:340px;width:28px;text-align:center;line-height:19px;color:#262626">7</div><div class="cell hc" style="left:-1px;top:358px;width:28px;text-align:center;line-height:19px;color:#262626">8</div><div class="cell hc" style="left:-1px;top:376px;width:28px;text-align:center;line-height:19px;color:#262626">9</div><div class="cell hc" style="left:-1px;top:394px;width:28px;text-align:center;line-height:19px;color:#262626">10</div><div class="cell hc" style="left:-1px;top:412px;width:28px;text-align:center;line-height:19px;color:#262626">11</div><div class="cell hc" style="left:-1px;top:430px;width:28px;text-align:center;line-height:19px;color:#262626">12</div><div class="cell hc" style="left:-1px;top:448px;width:28px;text-align:center;line-height:19px;color:#262626">13</div><div class="cell hc" style="left:-1px;top:466px;width:28px;text-align:center;line-height:19px;color:#262626">14</div><div class="cell hc" style="left:-1px;top:484px;width:28px;text-align:center;line-height:19px;color:#262626">15</div><div class="cell hc" style="left:-1px;top:502px;width:28px;text-align:center;line-height:19px;color:#262626">16</div><div class="cell hc" style="left:-1px;top:520px;width:28px;text-align:center;line-height:19px;color:#262626">17</div><div class="cell hc" style="left:-1px;top:538px;width:28px;text-align:center;line-height:19px;color:#262626">18</div><div class="cell hc" style="left:-1px;top:556px;width:28px;text-align:center;line-height:19px;color:#262626">19</div><div class="cell hc" style="left:-1px;top:574px;width:28px;text-align:center;line-height:19px;color:#262626">20</div><div class="cell hc" style="left:-1px;top:592px;width:28px;text-align:center;line-height:19px;color:#262626">21</div><div class="cell hc" style="left:-1px;top:610px;width:28px;text-align:center;line-height:19px;color:#262626">22</div><div class="cell hc" style="left:-1px;top:628px;width:28px;text-align:center;line-height:19px;color:#262626">23</div><div class="abs" style="left:604px;top:229px;width:145px;height:2px;background:#217346;"></div><div class="abs" style="left:27px;top:267px;width:2px;height:72px;background:#217346;"></div><div class="abs" style="left:29px;top:249px;width:720px;height:17px;background:#d0cece;"></div><div class="abs" style="left:29px;top:267px;width:144px;height:17px;background:#f8cbad;"></div><div class="abs" style="left:29px;top:285px;width:288px;height:17px;background:#f8cbad;"></div><div class="abs" style="left:29px;top:303px;width:432px;height:17px;background:#f8cbad;"></div><div class="abs" style="left:461px;top:267px;width:144px;height:53px;background:#f8cbad;"></div><div class="abs" style="left:173px;top:267px;width:288px;height:17px;background:#fff;"></div><div class="abs" style="left:317px;top:285px;width:144px;height:17px;background:#fff;"></div><div class="abs" style="left:605px;top:267px;width:143px;height:71px;background:#adb9a8;"></div><div class="abs" style="left:605px;top:267px;width:71px;height:17px;background:#e2efda;"></div><div class="abs" style="left:100px;top:249px;width:1px;height:72px;background:repeating-linear-gradient(180deg,#000 0 1px,transparent 1px 2px)"></div><div class="abs" style="left:244px;top:249px;width:1px;height:72px;background:repeating-linear-gradient(180deg,#000 0 1px,transparent 1px 2px)"></div><div class="abs" style="left:388px;top:249px;width:1px;height:72px;background:repeating-linear-gradient(180deg,#000 0 1px,transparent 1px 2px)"></div><div class="abs" style="left:532px;top:249px;width:1px;height:72px;background:repeating-linear-gradient(180deg,#000 0 1px,transparent 1px 2px)"></div><div class="abs" style="left:676px;top:249px;width:1px;height:90px;background:repeating-linear-gradient(180deg,#000 0 1px,transparent 1px 2px)"></div><div class="abs" style="left:28px;top:284px;width:720px;height:1px;background:repeating-linear-gradient(90deg,#000 0 1px,transparent 1px 2px)"></div><div class="abs" style="left:28px;top:302px;width:720px;height:1px;background:repeating-linear-gradient(90deg,#000 0 1px,transparent 1px 2px)"></div><div class="abs" style="left:28px;top:248px;width:721px;height:1px;background:#000;"></div><div class="abs" style="left:28px;top:266px;width:721px;height:1px;background:#000;"></div><div class="abs" style="left:28px;top:320px;width:721px;height:1px;background:#000;"></div><div class="abs" style="left:172px;top:248px;width:1px;height:73px;background:#000;"></div><div class="abs" style="left:316px;top:248px;width:1px;height:73px;background:#000;"></div><div class="abs" style="left:460px;top:248px;width:1px;height:73px;background:#000;"></div><div class="abs" style="left:604px;top:248px;width:1px;height:73px;background:#000;"></div><div class="abs" style="left:748px;top:248px;width:1px;height:73px;background:#000;"></div><div class="cell" style="left:28px;top:232px;padding-left:2.4px;">WZposv2</div><div class="cell" style="left:28px;top:250px;padding-left:2.4px;">A</div><div class="cell" style="left:460px;top:250px;padding-left:2.4px;">B</div><div class="cell" style="left:604px;top:250px;padding-left:2.4px;">X</div><div class="cell num" style="left:28px;top:268px;width:72px;padding-right:3.2px;">2.2</div><div class="cell num" style="left:100px;top:268px;width:72px;padding-right:3.2px;">0</div><div class="cell num" style="left:460px;top:268px;width:72px;padding-right:3.2px;">1.598</div><div class="cell num" style="left:532px;top:268px;width:72px;padding-right:3.2px;">1.4644</div><div class="cell num" style="left:676px;top:268px;width:72px;padding-right:3.2px;">0.64</div><div class="cell num" style="left:28px;top:286px;width:72px;padding-right:3.2px;">−0.11</div><div class="cell num" style="left:100px;top:286px;width:72px;padding-right:3.2px;">−0.93</div><div class="cell num" style="left:172px;top:286px;width:72px;padding-right:3.2px;">2.32</div><div class="cell num" style="left:244px;top:286px;width:72px;padding-right:3.2px;">0</div><div class="cell num" style="left:460px;top:286px;width:72px;padding-right:3.2px;">1.3498</div><div class="cell num" style="left:532px;top:286px;width:72px;padding-right:3.2px;">1.4398</div><div class="cell num" style="left:604px;top:286px;width:72px;padding-right:3.2px;">0.51</div><div class="cell num" style="left:676px;top:286px;width:72px;padding-right:3.2px;">0.71</div><div class="cell num" style="left:28px;top:304px;width:72px;padding-right:3.2px;">0.81</div><div class="cell num" style="left:100px;top:304px;width:72px;padding-right:3.2px;">0.37</div><div class="cell num" style="left:172px;top:304px;width:72px;padding-right:3.2px;">−0.8</div><div class="cell num" style="left:244px;top:304px;width:72px;padding-right:3.2px;">−0.92</div><div class="cell num" style="left:316px;top:304px;width:72px;padding-right:3.2px;">2.29</div><div class="cell num" style="left:388px;top:304px;width:72px;padding-right:3.2px;">0</div><div class="cell num" style="left:460px;top:304px;width:72px;padding-right:3.2px;">2.0561</div><div class="cell num" style="left:532px;top:304px;width:72px;padding-right:3.2px;">−0.5441</div><div class="cell num" style="left:604px;top:304px;width:72px;padding-right:3.2px;">0.59</div><div class="cell num" style="left:676px;top:304px;width:72px;padding-right:3.2px;">−0.15</div><div class="cell num" style="left:604px;top:322px;width:72px;padding-right:3.2px;">0.088579</div><div class="cell num" style="left:676px;top:322px;width:72px;padding-right:3.2px;">0</div><div class="cell" style="left:604px;top:268px;padding-left:2.4px;">F5,G3:H5）</div><div class="abs" style="left:603px;top:265px;width:147px;height:75px;border:2px solid #217346;box-shadow:inset 0 0 0 1px #dbe4d6"></div><div class="abs" style="left:745px;top:335px;width:7px;height:7px;background:#217346;border:1px solid #fff"></div><div class="abs" style="left:778px;top:211px;width:478px;height:388px;background:#f0f0f0;border:1px solid #5e5e5e;box-shadow:4px 5px 20px rgba(0,0,0,.3)"></div><div class="abs" style="left:779px;top:212px;width:476px;height:30px;background:#fff;"></div><span class="t" id="t69" style="top:221.00px;font-size:12px;color:#000;left:788.00px;transform-origin:0 50%;transform:scaleX(0.9414);">関数の引数</span><span class="t" id="t70" style="top:220.50px;font-size:12px;color:#000;left:1183.50px;transform-origin:0 50%;transform:scaleX(0.8972);">?</span><svg class="abs" style="left:1226.5px;top:220.5px" width="10.5" height="10.5" viewBox="0 0 10.5 10.5" fill="none" stroke="#000" stroke-width="1"><path d="M.4.400l9.700 9.700M10.100.400l-9.700 9.700"/></svg><div class="abs" style="left:785px;top:257px;width:463px;height:153px;border:1px solid #dcdcdc"></div><div class="abs" style="left:789px;top:250px;width:58px;height:14px;background:#f0f0f0;"></div><span class="t" id="t71" style="top:251.50px;font-size:12px;color:#000;left:791.50px;transform-origin:0 50%;transform:scaleX(1.0358);">WZposv2</span><span class="t" id="t72" style="top:278.80px;font-size:12px;color:#000;right:499.50px;transform-origin:100% 50%;transform:scaleX(1.0734);">Uplo</span><div class="abs" style="left:834px;top:273px;width:177px;height:23px;background:#fff;border:1px solid #a0a0a0;box-shadow:inset 0 0 0 1px #e4e4e4"></div><div class="abs" style="left:1010px;top:273px;width:22px;height:23px;background:#d6d6d6;border:1px solid #a8a8a8"></div><div class="abs" style="left:1012.5px;top:276.5px;width:16px;height:15.5px;background:#fdfdfd;"></div><svg class="abs" style="left:1015.5px;top:278px" width="9" height="11" viewBox="0 0 9 11" ><path d="M4.500 1.500v6.500" fill="none" stroke="#000" stroke-width="1.600"/><path d="M1 5l3.500-4 3.500 4z" fill="#000"/><path d="M.5 10h8" stroke="#000" stroke-width="1.300"/></svg><span class="t" id="t73" style="top:278.80px;font-size:12px;color:#000;left:1042.50px;transform-origin:0 50%;transform:scaleX(1.0690);">=</span><div class="abs" style="left:838px;top:277px;width:17px;height:14px;background:#c4c4c4;"></div><div class="abs" style="left:855px;top:276px;width:1px;height:16px;background:#000;"></div><span class="t" id="t74" style="top:277.30px;font-size:12px;color:#000;left:838.50px;transform-origin:0 50%;transform:scaleX(1.0524);">"L"</span><span class="t" id="t75" style="top:278.30px;font-size:12px;color:#000;left:1060.50px;transform-origin:0 50%;transform:scaleX(1.1182);">"L"</span><span class="t" id="t76" style="top:305.90px;font-size:12px;color:#000;right:499.50px;transform-origin:100% 50%;transform:scaleX(0.9802);">N</span><div class="abs" style="left:834px;top:300px;width:177px;height:23px;background:#fff;border:1px solid #a0a0a0;box-shadow:inset 0 0 0 1px #e4e4e4"></div><div class="abs" style="left:1010px;top:300px;width:22px;height:23px;background:#d6d6d6;border:1px solid #a8a8a8"></div><div class="abs" style="left:1012.5px;top:303.5px;width:16px;height:15.5px;background:#fdfdfd;"></div><svg class="abs" style="left:1015.5px;top:305px" width="9" height="11" viewBox="0 0 9 11" ><path d="M4.500 1.500v6.500" fill="none" stroke="#000" stroke-width="1.600"/><path d="M1 5l3.500-4 3.500 4z" fill="#000"/><path d="M.5 10h8" stroke="#000" stroke-width="1.300"/></svg><span class="t" id="t77" style="top:305.90px;font-size:12px;color:#000;left:1042.50px;transform-origin:0 50%;transform:scaleX(1.0690);">=</span><span class="t" id="t78" style="top:304.40px;font-size:12px;color:#000;left:838.50px;transform-origin:0 50%;transform:scaleX(0.9720);">3</span><span class="t" id="t79" style="top:305.40px;font-size:12px;color:#000;left:1060.50px;transform-origin:0 50%;transform:scaleX(0.9720);">3</span><span class="t" id="t80" style="top:333.00px;font-size:12px;color:#000;right:499.50px;transform-origin:100% 50%;">A</span><div class="abs" style="left:834px;top:327px;width:177px;height:23px;background:#fff;border:1px solid #a0a0a0;box-shadow:inset 0 0 0 1px #e4e4e4"></div><div class="abs" style="left:1010px;top:327px;width:22px;height:23px;background:#d6d6d6;border:1px solid #a8a8a8"></div><div class="abs" style="left:1012.5px;top:330.5px;width:16px;height:15.5px;background:#fdfdfd;"></div><svg class="abs" style="left:1015.5px;top:332px" width="9" height="11" viewBox="0 0 9 11" ><path d="M4.500 1.500v6.500" fill="none" stroke="#000" stroke-width="1.600"/><path d="M1 5l3.500-4 3.500 4z" fill="#000"/><path d="M.5 10h8" stroke="#000" stroke-width="1.300"/></svg><span class="t" id="t81" style="top:333.00px;font-size:12px;color:#000;left:1042.50px;transform-origin:0 50%;transform:scaleX(1.0690);">=</span><span class="t" id="t82" style="top:331.50px;font-size:12px;color:#000;left:838.50px;transform-origin:0 50%;transform:scaleX(1.0307);">A3:F5</span><span class="t" id="t83" style="top:332.50px;font-size:12px;color:#000;left:1060.50px;transform-origin:0 50%;transform:scaleX(1.1355);">{2.2,0,0,0,0,0;-0.11,-0.93,2....</span><span class="t" id="t84" style="top:360.10px;font-size:12px;color:#000;right:499.50px;transform-origin:100% 50%;transform:scaleX(0.9357);">B</span><div class="abs" style="left:834px;top:354px;width:177px;height:23px;background:#fff;border:1px solid #a0a0a0;box-shadow:inset 0 0 0 1px #e4e4e4"></div><div class="abs" style="left:1010px;top:354px;width:22px;height:23px;background:#d6d6d6;border:1px solid #a8a8a8"></div><div class="abs" style="left:1012.5px;top:357.5px;width:16px;height:15.5px;background:#fdfdfd;"></div><svg class="abs" style="left:1015.5px;top:359px" width="9" height="11" viewBox="0 0 9 11" ><path d="M4.500 1.500v6.500" fill="none" stroke="#000" stroke-width="1.600"/><path d="M1 5l3.500-4 3.500 4z" fill="#000"/><path d="M.5 10h8" stroke="#000" stroke-width="1.300"/></svg><span class="t" id="t85" style="top:360.10px;font-size:12px;color:#000;left:1042.50px;transform-origin:0 50%;transform:scaleX(1.0690);">=</span><span class="t" id="t86" style="top:358.60px;font-size:12px;color:#000;left:838.50px;transform-origin:0 50%;transform:scaleX(1.0378);">G3:H5</span><span class="t" id="t87" style="top:359.60px;font-size:12px;color:#000;left:1060.50px;transform-origin:0 50%;transform:scaleX(1.0985);">{1.598,1.4644;1.3498,1.439...</span><span class="t" id="t88" style="top:387.20px;font-size:12px;color:#000;right:499.50px;transform-origin:100% 50%;transform:scaleX(1.0654);">Nrhs</span><div class="abs" style="left:834px;top:381px;width:177px;height:23px;background:#fff;border:1px solid #a0a0a0;box-shadow:inset 0 0 0 1px #e4e4e4"></div><div class="abs" style="left:1010px;top:381px;width:22px;height:23px;background:#d6d6d6;border:1px solid #a8a8a8"></div><div class="abs" style="left:1012.5px;top:384.5px;width:16px;height:15.5px;background:#fdfdfd;"></div><svg class="abs" style="left:1015.5px;top:386px" width="9" height="11" viewBox="0 0 9 11" ><path d="M4.500 1.500v6.500" fill="none" stroke="#000" stroke-width="1.600"/><path d="M1 5l3.500-4 3.500 4z" fill="#000"/><path d="M.5 10h8" stroke="#000" stroke-width="1.300"/></svg><span class="t" id="t89" style="top:387.20px;font-size:12px;color:#000;left:1042.50px;transform-origin:0 50%;transform:scaleX(1.0690);">=</span><span class="t" id="t90" style="top:418.50px;font-size:12px;color:#000;left:1042.50px;transform-origin:0 50%;transform:scaleX(1.0690);">=</span><span class="t" id="t91" style="top:418.50px;font-size:12px;color:#000;left:1060.50px;transform-origin:0 50%;transform:scaleX(1.1193);">{0.86,0.64;0.51,0.71;0.59,-0...</span><span class="t" id="t92" style="top:436.50px;font-size:12px;color:#000;left:785.00px;transform-origin:0 50%;">連立一次方程式</span><span class="t" id="t93" style="top:436.50px;font-size:12px;color:#000;left:872.50px;transform-origin:0 50%;transform:scaleX(1.1410);">AX = B</span><span class="t" id="t94" style="top:436.50px;font-size:12px;color:#000;left:919.00px;transform-origin:0 50%;transform:scaleX(0.9652);">の解 (正定値</span><span class="t" id="t95" style="top:436.50px;font-size:12px;color:#000;left:984.50px;transform-origin:0 50%;transform:scaleX(0.6582);">エルミート</span><span class="t" id="t96" style="top:436.50px;font-size:12px;color:#000;left:1024.50px;transform-origin:0 50%;transform:scaleX(1.0535);">行列) (実数部／虚数部分離形式)</span><span class="t" id="t97" style="top:464.50px;font-size:12px;color:#000;left:957.50px;transform-origin:0 50%;transform:scaleX(1.0127);">Uplo</span><span class="t" id="t98" style="top:464.50px;font-size:12px;color:#000;left:990.00px;transform-origin:0 50%;">：</span><span class="t" id="t99" style="top:464.50px;font-size:12px;color:#000;left:1001.00px;transform-origin:0 50%;transform:scaleX(1.0116);">上三角/下三角指定</span><span class="t" id="t100" style="top:464.50px;font-size:12px;color:#000;left:1106.50px;transform-origin:0 50%;transform:scaleX(0.9316);">(U または L)</span><div class="abs" style="left:785px;top:521px;width:464px;height:1px;background:#d7d7d7;"></div><span class="t" id="t101" style="top:537.50px;font-size:12px;color:#000;left:785.00px;transform-origin:0 50%;transform:scaleX(1.0560);">数式の結果 =&nbsp; 0.86</span><span class="t" id="t102" style="top:570.00px;font-size:12px;color:#0563c1;left:785.00px;transform-origin:0 50%;transform:scaleX(0.8831);text-decoration:underline;">この関数のヘルプ(H)</span><div class="abs" style="left:1090px;top:564px;width:74px;height:25px;background:#e1e1e1;border:2px solid #0078d7"></div><span class="t" id="t103" style="top:570.50px;font-size:12px;color:#000;left:1118.00px;transform-origin:0 50%;transform:scaleX(1.0090);">OK</span><div class="abs" style="left:1174px;top:564px;width:74px;height:25px;background:#e1e1e1;border:1px solid #adadad"></div><span class="t" id="t104" style="top:570.50px;font-size:12px;color:#000;left:1186.50px;transform-origin:0 50%;transform:scaleX(0.7998);">キャンセル</span>
</body>
</html>
